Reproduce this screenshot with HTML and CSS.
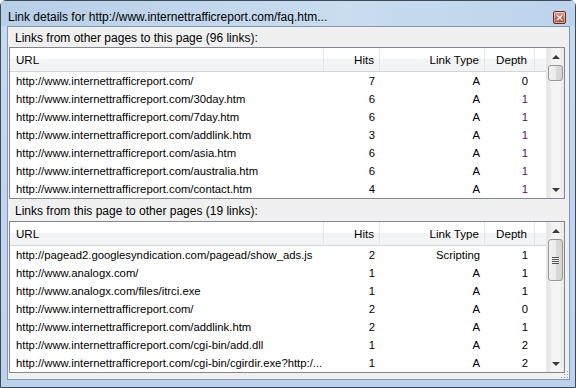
FILE: index.html
```html
<!DOCTYPE html>
<html lang="en">
<head>
    <meta charset="UTF-8">
    <title>Link details</title>
    <link rel="stylesheet" href="styles.css">
</head>
<body>
    <div class="window">
        <div class="titlebar">
            <span class="title">Link details for http://www.internettrafficreport.com/faq.htm...</span>
            <button class="close-btn" title="Close"><span class="close-x">&#215;</span></button>
        </div>
        <div class="client">
            <div class="section-label">Links from other pages to this page (96 links):</div>
            <div class="listview">
                <div class="lv-body">
                    <div class="lv-row lv-header">
                        <div class="cell">URL</div>
                        <div class="cell num">Hits</div>
                        <div class="cell num">Link Type</div>
                        <div class="cell num depth-col">Depth</div>
                        <div class="cell filler"></div>
                    </div>
                    <div class="lv-row"><div class="cell">http://www.internettrafficreport.com/</div><div class="cell num">7</div><div class="cell num">A</div><div class="cell num depth-col">0</div></div>
                    <div class="lv-row"><div class="cell">http://www.internettrafficreport.com/30day.htm</div><div class="cell num">6</div><div class="cell num">A</div><div class="cell num depth-col d1">1</div></div>
                    <div class="lv-row"><div class="cell">http://www.internettrafficreport.com/7day.htm</div><div class="cell num">6</div><div class="cell num">A</div><div class="cell num depth-col d1">1</div></div>
                    <div class="lv-row"><div class="cell">http://www.internettrafficreport.com/addlink.htm</div><div class="cell num">3</div><div class="cell num">A</div><div class="cell num depth-col d1">1</div></div>
                    <div class="lv-row"><div class="cell">http://www.internettrafficreport.com/asia.htm</div><div class="cell num">6</div><div class="cell num">A</div><div class="cell num depth-col d1">1</div></div>
                    <div class="lv-row"><div class="cell">http://www.internettrafficreport.com/australia.htm</div><div class="cell num">6</div><div class="cell num">A</div><div class="cell num depth-col d1">1</div></div>
                    <div class="lv-row"><div class="cell">http://www.internettrafficreport.com/contact.htm</div><div class="cell num">4</div><div class="cell num">A</div><div class="cell num depth-col d1">1</div></div>
                </div>
                <div class="scrollbar">
                    <div class="sb-btn"><span class="arrow-up"></span></div>
                    <div class="sb-track">
                        <div class="sb-thumb small"></div>
                    </div>
                    <div class="sb-btn"><span class="arrow-down"></span></div>
                </div>
            </div>

            <div class="section-label second">Links from this page to other pages (19 links):</div>
            <div class="listview">
                <div class="lv-body">
                    <div class="lv-row lv-header">
                        <div class="cell">URL</div>
                        <div class="cell num">Hits</div>
                        <div class="cell num">Link Type</div>
                        <div class="cell num depth-col">Depth</div>
                        <div class="cell filler"></div>
                    </div>
                    <div class="lv-row"><div class="cell">http://pagead2.googlesyndication.com/pagead/show_ads.js</div><div class="cell num">2</div><div class="cell num">Scripting</div><div class="cell num depth-col">1</div></div>
                    <div class="lv-row"><div class="cell">http://www.analogx.com/</div><div class="cell num">1</div><div class="cell num">A</div><div class="cell num depth-col">1</div></div>
                    <div class="lv-row"><div class="cell">http://www.analogx.com/files/itrci.exe</div><div class="cell num">1</div><div class="cell num">A</div><div class="cell num depth-col">1</div></div>
                    <div class="lv-row"><div class="cell">http://www.internettrafficreport.com/</div><div class="cell num">2</div><div class="cell num">A</div><div class="cell num depth-col">0</div></div>
                    <div class="lv-row"><div class="cell">http://www.internettrafficreport.com/addlink.htm</div><div class="cell num">2</div><div class="cell num">A</div><div class="cell num depth-col">1</div></div>
                    <div class="lv-row"><div class="cell">http://www.internettrafficreport.com/cgi-bin/add.dll</div><div class="cell num">1</div><div class="cell num">A</div><div class="cell num depth-col">2</div></div>
                    <div class="lv-row"><div class="cell">http://www.internettrafficreport.com/cgi-bin/cgirdir.exe?http:/...</div><div class="cell num">1</div><div class="cell num">A</div><div class="cell num depth-col">2</div></div>
                </div>
                <div class="scrollbar">
                    <div class="sb-btn"><span class="arrow-up"></span></div>
                    <div class="sb-track">
                        <div class="sb-thumb big"><span class="grip"></span></div>
                    </div>
                    <div class="sb-btn"><span class="arrow-down"></span></div>
                </div>
            </div>
            <svg class="size-grip" width="10" height="10" viewBox="0 0 10 10">
                <rect x="8" y="2" width="1" height="1" fill="#a0a0a0"/>
                <rect x="5" y="5" width="1" height="1" fill="#a0a0a0"/>
                <rect x="8" y="5" width="1" height="1" fill="#a0a0a0"/>
                <rect x="2" y="8" width="1" height="1" fill="#a0a0a0"/>
                <rect x="5" y="8" width="1" height="1" fill="#a0a0a0"/>
                <rect x="8" y="8" width="1" height="1" fill="#a0a0a0"/>
            </svg>
        </div>
    </div>
</body>
</html>
```

FILE: styles.css
```css
body {
    margin: 0;
    font-family: "Liberation Sans", Arial, sans-serif;
    font-size: 12px;
    color: #000;
}
.window {
    width: 576px;
    height: 388px;
    box-sizing: border-box;
    border: 1px solid #3d4a5a;
    border-radius: 6px 6px 0 0;
    background: linear-gradient(to bottom, #bfd4ec 0, #c6daf0 25px, #bcd2ec 100%);
    display: flex;
    flex-direction: column;
}
.titlebar {
    height: 25px;
    box-sizing: border-box;
    display: flex;
    align-items: flex-start;
    justify-content: space-between;
    padding: 7px 9px 0 7px;
    background: linear-gradient(to right, #b8cfe8, #c9dcf0 60%, #bdd3ec);
}
.title {
    font-size: 12px;
    line-height: 18px;
    color: #000;
}
.close-btn {
    width: 13px;
    height: 13px;
    margin-top: 3px;
    padding: 0;
    border: 1px solid #5a2f28;
    border-radius: 2px;
    background: linear-gradient(to bottom, #e6a598, #c8604c 55%, #b85240);
    box-shadow: inset 0 0 0 1px rgba(255, 255, 255, 0.45);
    display: flex;
    align-items: center;
    justify-content: center;
    cursor: pointer;
}
.close-x {
    color: #fff;
    font-family: "DejaVu Sans", sans-serif;
    font-weight: bold;
    font-size: 11px;
    line-height: 10px;
    text-shadow: 0 0 1px #5a2f28;
}
.client {
    flex: 1;
    margin: 0 5px 7px 6px;
    border: 1px solid #8397b0;
    background: #f0f0f0;
    display: flex;
    flex-direction: column;
    padding: 0 4px 0 1px;
    position: relative;
}
.section-label {
    height: 20px;
    line-height: 22px;
    padding-left: 6px;
}
.section-label.second {
    height: 22px;
    line-height: 24px;
}
.listview {
    height: 152px;
    box-sizing: border-box;
    border: 1px solid #828790;
    background: #fff;
    display: flex;
}
.lv-body {
    flex: 1;
    display: flex;
    flex-direction: column;
    overflow: hidden;
}
.lv-row {
    display: grid;
    grid-template-columns: 314px 56px 105px 50px 1fr;
    height: 18px;
    line-height: 19px;
    white-space: nowrap;
    font-size: 11.3px;
}
.cell {
    padding: 0 0 0 6px;
    overflow: hidden;
}
.cell.num {
    text-align: right;
    padding: 0 5px 0 0;
}
.cell.depth-col {
    padding-right: 7px;
}
.d1 {
    color: #5e1070;
}
.lv-header {
    height: 24px;
    line-height: 23px;
    font-size: 11.6px;
    box-sizing: border-box;
    border-bottom: 1px solid #d5d5d5;
    background: linear-gradient(to bottom, #ffffff 0, #ffffff 45%, #f3f4f6 50%, #f3f4f6 100%);
}
.lv-header .cell {
    border-right: 1px solid #e3e5e8;
}
.lv-header .cell.filler {
    border-right: none;
}
.scrollbar {
    width: 17px;
    display: flex;
    flex-direction: column;
    background: linear-gradient(to right, #e3e3e3, #f3f3f3 30%, #f5f5f5 70%, #e8e8e8);
    border-left: 1px solid #eaeaea;
}
.sb-btn {
    height: 17px;
    display: flex;
    align-items: center;
    justify-content: center;
}
.arrow-up {
    width: 0;
    height: 0;
    border-left: 4px solid transparent;
    border-right: 4px solid transparent;
    border-bottom: 4px solid #3a3a3a;
}
.arrow-down {
    width: 0;
    height: 0;
    border-left: 4px solid transparent;
    border-right: 4px solid transparent;
    border-top: 4px solid #3a3a3a;
}
.sb-track {
    flex: 1;
}
.sb-thumb {
    margin: 0 1px;
    box-sizing: border-box;
    border: 1px solid #989898;
    border-radius: 3px;
    background: linear-gradient(to right, #f2f2f2, #eaeaea 50%, #dcdcdc 51%, #d4d4d4);
    display: flex;
    align-items: center;
    justify-content: center;
}
.sb-thumb.small {
    height: 16px;
}
.sb-thumb.big {
    height: 42px;
}
.grip {
    width: 7px;
    height: 7px;
    background: repeating-linear-gradient(to bottom, #555 0, #555 1px, #eee 1px, #eee 2px);
}
.size-grip {
    position: absolute;
    right: 0;
    bottom: 0;
}
```
